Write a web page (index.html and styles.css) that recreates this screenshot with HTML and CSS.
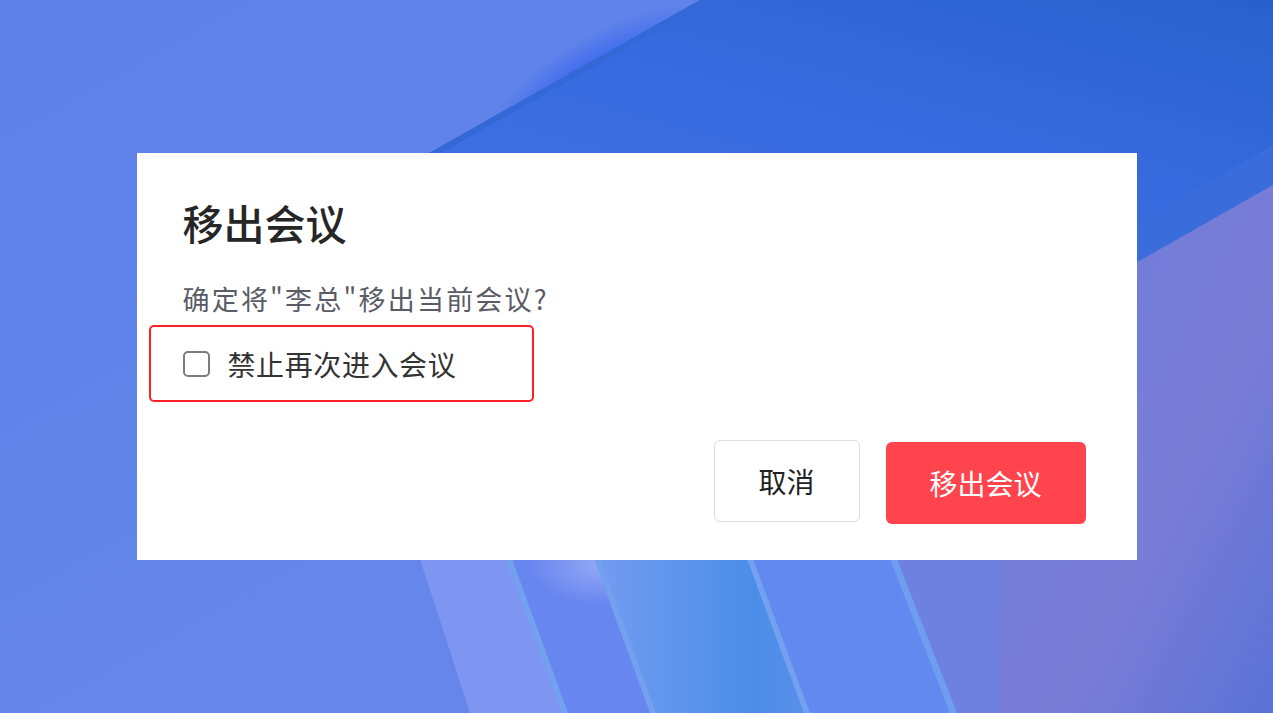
FILE: index.html
```html
<!DOCTYPE html>
<html lang="zh-CN">
<head>
    <meta charset="UTF-8">
    <meta name="viewport" content="width=device-width, initial-scale=1.0">
    <title>移出会议</title>
    <link rel="stylesheet" href="styles.css">
</head>
<body>
    <!-- 背景壁纸 -->
    <svg class="wallpaper" viewBox="0 0 1273 713" preserveAspectRatio="none">
        <defs>
            <linearGradient id="base" x1="0" y1="0" x2="1" y2="1">
                <stop offset="0" stop-color="#5b80e9"/>
                <stop offset="0.5" stop-color="#6486ec"/>
                <stop offset="1" stop-color="#6a84e6"/>
            </linearGradient>
            <linearGradient id="band" x1="0" y1="1" x2="1" y2="0">
                <stop offset="0" stop-color="#4676e2"/>
                <stop offset="0.6" stop-color="#386be0"/>
                <stop offset="1" stop-color="#2861cd"/>
            </linearGradient>
            <linearGradient id="purple" x1="0" y1="0" x2="1" y2="1">
                <stop offset="0" stop-color="#6a7ddc"/>
                <stop offset="0.6" stop-color="#7a7dd6"/>
                <stop offset="1" stop-color="#5a72d6"/>
            </linearGradient>
            <linearGradient id="mid" x1="0" y1="0" x2="1" y2="0">
                <stop offset="0" stop-color="#739cf0"/>
                <stop offset="0.75" stop-color="#4a8de8"/>
                <stop offset="1" stop-color="#5a8eea"/>
            </linearGradient>
            <radialGradient id="glow" cx="0.5" cy="0.5" r="0.5">
                <stop offset="0" stop-color="#2c5cee" stop-opacity="1"/>
                <stop offset="1" stop-color="#2c5cee" stop-opacity="0"/>
            </radialGradient>
            <radialGradient id="soft" cx="0.5" cy="0.5" r="0.5">
                <stop offset="0" stop-color="#9fb0f6" stop-opacity="0.8"/>
                <stop offset="1" stop-color="#9fb0f6" stop-opacity="0"/>
            </radialGradient>
        </defs>
        <rect width="1273" height="713" fill="url(#base)"/>
        <ellipse cx="600" cy="80" rx="130" ry="45" transform="rotate(-30 600 80)" fill="url(#glow)"/>
        <polygon points="700,0 1273,0 1273,150 1000,305 160,305" fill="url(#band)"/>
        <polygon points="700,0 712,0 172,305 160,305" fill="#3468d6"/>
        <polygon points="1273,145 1273,190 1000,345 1000,300" fill="#3a6cdc"/>
        <polygon points="1273,185 1273,713 1000,713 1000,340" fill="url(#purple)"/>
        <polygon points="510,559 597,559 653,713 565,713" fill="#6886f0"/>
        <ellipse cx="600" cy="565" rx="70" ry="40" fill="url(#soft)"/>
        <polygon points="597,559 750,559 807,713 653,713" fill="url(#mid)"/>
        <polygon points="750,559 893,559 953,713 807,713" fill="#6189f0"/>
        <polygon points="893,559 1000,559 1000,713 953,713" fill="#6e80e0"/>
        <polygon points="420,559 510,559 565,713 470,713" fill="#7f95f2"/>
        <polygon points="506,559 512,559 568,713 562,713" fill="#74a0f0"/>
        <polygon points="594,559 600,559 656,713 650,713" fill="#74a0f0"/>
        <polygon points="747,559 753,559 810,713 804,713" fill="#74a0f0"/>
        <polygon points="890,559 897,559 957,713 950,713" fill="#6f9ef0"/>
    </svg>

    <div class="dialog">
        <h1 class="dialog-title">移出会议</h1>
        <p class="dialog-text">确定将"李总"移出当前会议?</p>
        <label class="ban-row">
            <input type="checkbox" class="check">
            <span>禁止再次进入会议</span>
        </label>
        <div class="dialog-actions">
            <button class="btn-cancel">取消</button>
            <button class="btn-remove">移出会议</button>
        </div>
    </div>
</body>
</html>
```
FILE: styles.css
```css
body {
    font-family: "Noto Sans CJK SC", "Noto Sans", sans-serif;
    margin: 0;
    height: 100vh;
    overflow: hidden;
    display: flex;
    align-items: center;
    justify-content: center;
}

.wallpaper {
    position: fixed;
    left: 0;
    top: 0;
    width: 100%;
    height: 100%;
    z-index: -1;
}

.dialog {
    width: 1000px;
    height: 407px;
    box-sizing: border-box;
    background: #fff;
    padding: 45px 51px 36px 46px;
    display: flex;
    flex-direction: column;
}

.dialog-title {
    margin: 0;
    font-size: 41px;
    font-weight: 500;
    line-height: 48px;
    color: #262626;
}

.dialog-text {
    margin: 35px 0 0;
    font-size: 27px;
    letter-spacing: 2.2px;
    line-height: 36px;
    color: #5a5b66;
}

.ban-row {
    align-self: flex-start;
    display: flex;
    align-items: center;
    gap: 18px;
    margin: 8px 0 0 -34px;
    padding: 0 76px 0 32px;
    height: 77px;
    box-sizing: border-box;
    border: 2px solid #ff2027;
    border-radius: 5px;
    font-size: 28px;
    letter-spacing: 0.6px;
    color: #333;
}

.check {
    appearance: none;
    margin: 0;
    width: 27px;
    height: 26px;
    box-sizing: border-box;
    border: 2px solid #7c7c7c;
    border-radius: 5px;
    background: #fff;
}

.dialog-actions {
    margin-top: auto;
    display: flex;
    justify-content: flex-end;
    align-items: flex-end;
    gap: 26px;
}

button {
    font-family: inherit;
    font-size: 28px;
    border-radius: 6px;
    cursor: pointer;
    height: 82px;
}

.btn-cancel {
    width: 146px;
    background: #fff;
    color: #222;
    border: 1.5px solid #dcdcdc;
    margin-bottom: 2px;
}

.btn-remove {
    width: 200px;
    background: #ff444e;
    color: #fff;
    border: none;
}
```
